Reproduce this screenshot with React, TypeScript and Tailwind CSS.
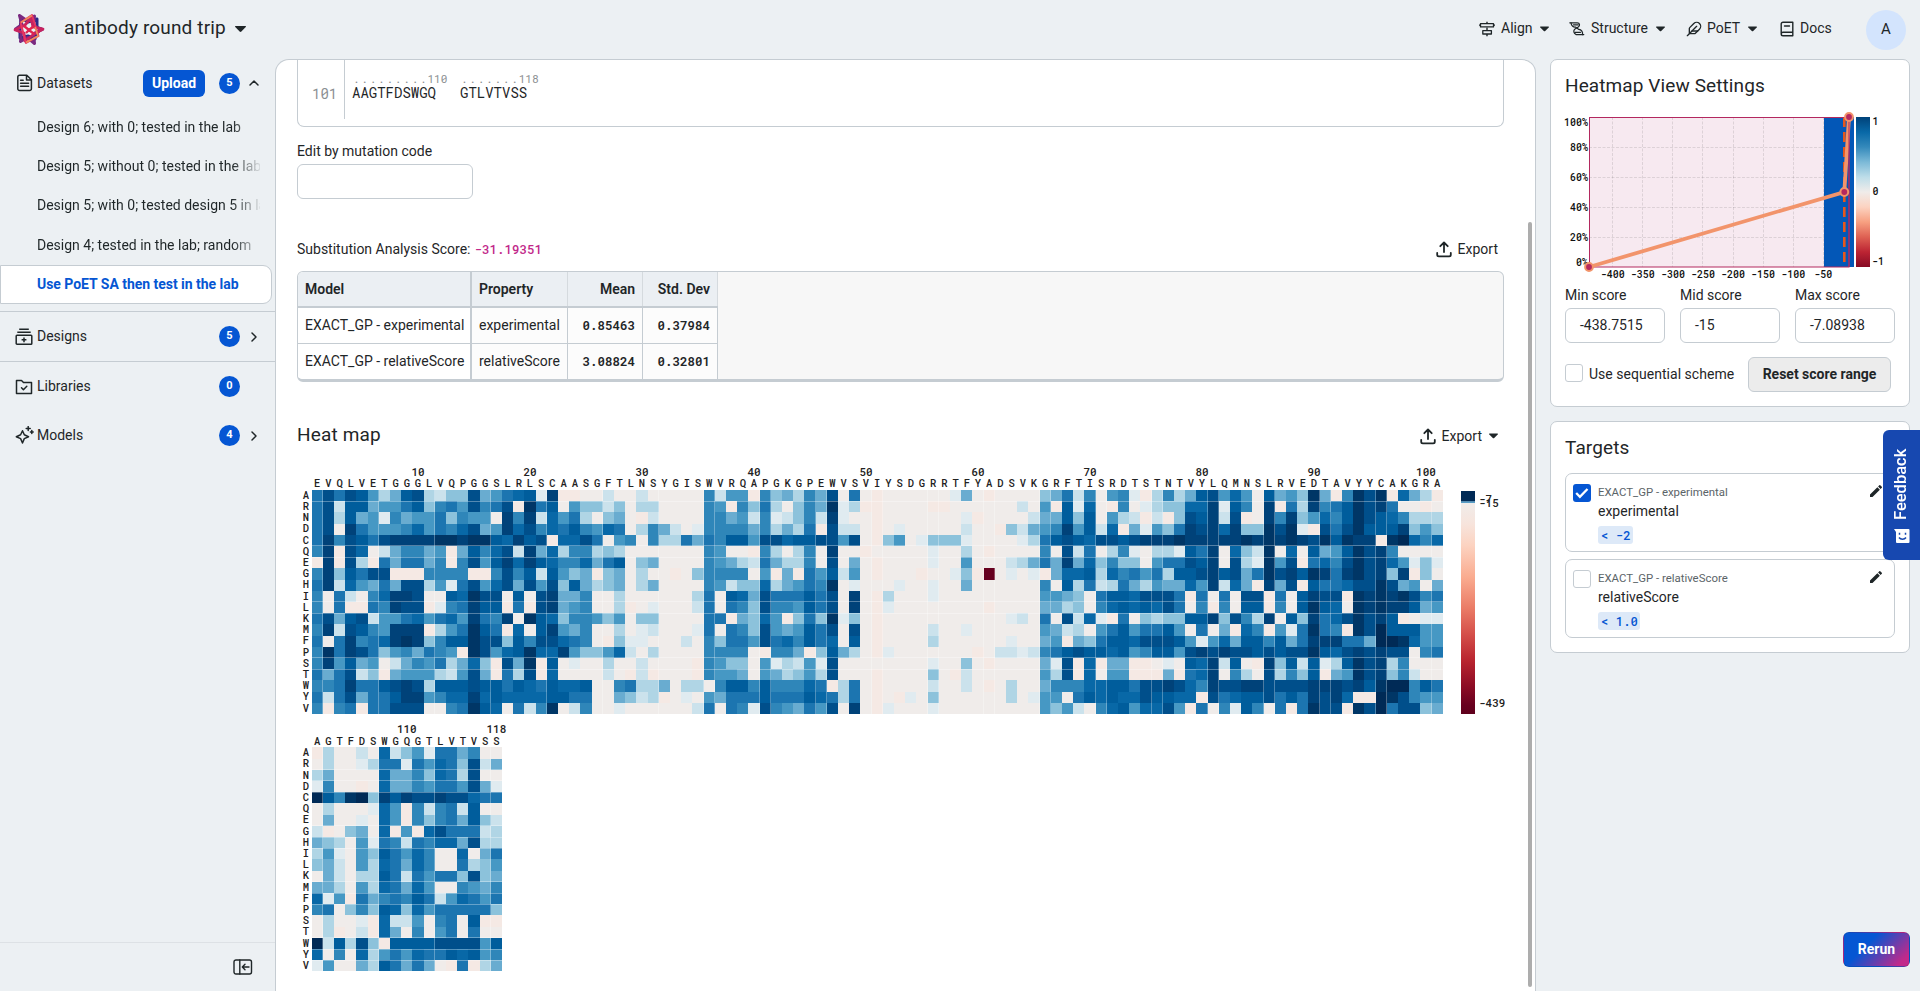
import React from "react";
import { LuFeather, LuChevronUp, LuChevronRight } from "react-icons/lu";
import { MdEdit } from "react-icons/md";

const AMINO = "ARNDCQEGHILKMFPSTWYV";

const SEQ_A =
  "EVQLVETGGGLVQPGGSLRLSCAASGFTLNSYGISWVRQAPGKGPEWVSVIYSDGRRTFYADSVKGRFTISRDTSTNTVYLQMNSLRVEDTAVYYCAKGRA";
const SEQ_B = "AGTFDSWGQGTLVTVSS";

const SHADES: Record<string, string> = {
  ".": "#f0ecea",
  p: "#f5e9e4",
  "1": "#e0ebf0",
  "2": "#cbe2ec",
  "3": "#b0d5e5",
  "4": "#8cc2db",
  "5": "#69acd0",
  "6": "#4698c4",
  "7": "#2f86b9",
  "8": "#1c75b0",
  "9": "#0868a7",
  a: "#005d9c",
  b: "#004f8b",
  c: "#004279",
  d: "#003666",
  e: "#002a56",
  X: "#67001f",
};

const ROWS_A = [
  "8b8ba 635ab 3244b 5689a 1cpp. .2..2 .... . 7266p 74537 5b.8. p.... ..15. p.... 4582 7 .671p 3735a b696. a564d 5p7db dp953 p",
  "8b2aa 5668a 4786b 78bpd 8a.64 424.3 3... . 76p74 83.47 5d13p p.... pp... ...2. 6pa1 9 .p7.1 34499 c1a7. cp83c 78adb c8..p .",
  "8b3a5 61756 68476 6.c7c 29683 .45.p 2... . 77562 71247 2c1.. p.... ...1p ....2 55a4 a .632p 2p4ba c2bp. c7c46 97adb a9733 3",
  "8b.c8 66679 6879b 56c9b 798a7 698.3 752. 1 77775 73538 pb22. p.1.. ...2. .p425 67c6 a 29p51 648cb c9c44 dbd1p b8bda aac46 4",
  "8c7ba 8bccc cddcd da9ca bp99b 8.67. 7338 5 87aa6 bb9aa bb6b. p46.1 4441. ...13 8aba 9 bbabc ccdcc cccdc dcdcb dadcc pde97 9",
  "7cpb9 .2577 56p5a 79b2c 59377 343.. .... . 76..p 73.37 .c..p ..... 1..3. p.... 7.b2 8 .371. 331a8 c.942 d.9.a 56adb c7... .",
  "pcpb3 p8588 57p7b 6ac9c a9779 58a.4 5... . 76532 85337 .b.5. p.... 1..6. ..235 85c5 9 4744. 688ba c.b31 d6bp8 97bdb c9614 1",
  "7c4a8 bbppp 7777p p7b7a 2a645 p45.3 ..p. 4 7777. 6p5p8 6a26. p...p ..14p X.1.1 p599 a 39786 83aab cab58 dbcad c8cdb c4cp4 .",
  "8c296 585bb 3618b 69b5b 6b4a5 345.3 5... . 76244 93568 7d.1. ..1.. 1..5. ..... 7.a3 8 23853 65596 c295p c5bpa 889bb db56. 5",
  "7.82. 79ccb ..a9d bb.a. bc557 ..3.. .... 3 8.a95 b888a 8b.c. p3... 1.... ..... 6654 . 8aa9b bb8p8 .8.bb p8.ac bbpdc dcdb7 8",
  "7.8pp 87cbb p178c aap8p bc567 ..3p. 1... 2 8.874 b776a 8b.c. p1... ..... p.... 5534 . 79a9a 9b8.7 p7.aa p7.ad a9.dc dcca5 6",
  "8b5ab 26689 6896c 87c.d a9477 646.4 4... . 88p54 96p48 4d14. p.... ..... ..12. 8.b2 9 1p8.4 344aa c4b73 c.a4c 89bdb cap.1 1",
  "7c2ba 76ccc p368d a8p9. ac657 ..3.1 2... 1 8.874 b656a 8b.b. p.... 2..1. ..... 6523 . 68a68 8a6.8 .5p97 p618d 87pdb eaaa6 6",
  "8.8c7 89cdc 47aad bb4a7 bb987 .p411 ...2 . 74886 b897a 89.a. p.... 3.... ..1.. 56p5 4 8aa9b bba61 695aa 7a58c cc885 eed96 6",
  "7d8cb 84675 876pd b69ad 99c64 4692. 3... . 7777. p775p 4a53. p1... ....p .2212 78ab a a9a67 aa6bc bcbba babbd a9bcb cbb.7 8",
  "7c6a5 6.257 68359 4pb5d pa.1. .3..2 .... p 7644. 61326 1b... ..... 1..4. p.... 51bp 9 p55pp .1.a9 c2a.p c4a2a 13adb c37.. .",
  "858b2 4p566 6326b 5p83b p9... .2.p2 p... p 7665. 65346 3b... p.... 4.p2. ..... 63bp 9 .66pp p5p89 c.73. b374a p56db c472. .",
  "778c8 8abcb 3aaab aa8a9 8a99a ..783 35.3 3 .7aa7 a7779 8p38. p.... 2..2. p.3.. 5777 9 9aa8b bcb97 cbbcc bbbbc ccbca dee7a 8",
  "828b5 88acc 6799c 9a999 9aa88 ..542 3p.1 . 65888 a888a 9838. p.p1. 4.... ..3.1 66.8 a 9a99b aa99p b89aa b8a8c bc9pp edb76 6",
  "7p78p 88bbb ..78d a9.82 7d.27 ..1.. .... 2 8.871 b7658 6b.c. p1... 1.... ..... 6462 . 79a69 9b6p8 .71a7 .8p8d bbpdb e8bb4 5",
].map((r) => r.replace(/ /g, ""));

const ROWS_B = [
  "p3..2 .9246 18857 ..",
  ".3..1 38818 6984b 25",
  "35... .9557 4983b ..",
  "17..p .9557 6886b 51",
  "ea7de 4cacb bcbb9 88",
  ".3... 196p7 2782a ..",
  ".5..1 .96p7 4785a 42",
  "2p.45 .9p6p 9b888 23",
  "543.6 18728 7995b 33",
  "361.6 4a869 7..9. 58",
  "452.6 39859 7..83 46",
  ".52.3 3a828 6884b 45",
  "553.6 39859 6..76 57",
  "916p8 5787a 82698 68",
  "78.47 4a949 68888 84",
  ".3..1 p9226 .78.a pp",
  ".3p.2 p95.7 .68.8 ..",
  "e2a3b 4paaa abbbb 6a",
  "9.7.9 36869 88a9a 67",
  "16..5 3a858 5.p8p 35",
].map((r) => r.replace(/ /g, ""));

const CELL = 11.2;

function Heatmap({
  seq,
  rows,
  start,
  ticks,
  width,
  height,
  top,
  seams,
  children,
}: {
  seq: string;
  rows: string[];
  start: number;
  ticks: number[];
  width: number;
  height: number;
  top: number;
  seams: number[];
  children?: React.ReactNode;
}) {
  const left = 14.6;
  const w = seq.length * CELL;
  const h = rows.length * CELL;
  return (
    <svg
      width={width}
      height={height}
      className="block font-['Roboto_Mono','DejaVu_Sans_Mono',monospace] text-[10.500px] font-medium"
      fill="#222"
    >
      {ticks.map((t) => (
        <text key={t} x={left + (t - start + 0.5) * CELL} y={top - 14} textAnchor="middle" fontSize="11">
          {t}
        </text>
      ))}
      {seq.split("").map((c, i) => (
        <text key={i} x={left + (i + 0.5) * CELL} y={top - 2.5} textAnchor="middle">
          {c}
        </text>
      ))}
      {AMINO.split("").map((c, i) => (
        <text key={c} x={9} y={top + (i + 0.5) * CELL + 3.2} textAnchor="middle">
          {c}
        </text>
      ))}
      <g shapeRendering="crispEdges">
        {rows.map((row, r) =>
          row.split("").map((v, c) => (
            <rect key={r + "-" + c} x={left + c * CELL} y={top + r * CELL} width={CELL} height={CELL} fill={SHADES[v]} />
          ))
        )}
        {rows.map((_, r) =>
          r > 0 && seams.includes(r % 5) ? (
            <rect key={r} x={left} y={Math.floor(top + r * CELL)} width={w} height="1" fill="#fff" fillOpacity=".33" />
          ) : null
        )}
        {seq.split("").map((_, c) =>
          c > 0 && (c % 5 === 1 || (c > 34 && c % 5 === 0)) ? (
            <rect key={c} x={Math.floor(left + c * CELL)} y={top} width="1" height={h} fill="#fff" fillOpacity=".3" />
          ) : null
        )}
      </g>
      {children}
    </svg>
  );
}

function ScaleStops() {
  return (
    <>
      <stop offset="0" stopColor="#f0ecea" />
      <stop offset="0.1" stopColor="#f7e4dc" />
      <stop offset="0.2" stopColor="#fcd3c1" />
      <stop offset="0.35" stopColor="#faac90" />
      <stop offset="0.5" stopColor="#ea7b66" />
      <stop offset="0.62" stopColor="#d5504a" />
      <stop offset="0.75" stopColor="#b8242f" />
      <stop offset="0.87" stopColor="#8c0c25" />
      <stop offset="0.96" stopColor="#67001f" />
      <stop offset="1" stopColor="#5f001c" />
    </>
  );
}

function Caret({ className = "" }: { className?: string }) {
  return (
    <svg width="9" height="6" viewBox="0 0 9 6" className={className}>
      <path d="M0.3 1.4C0 1 .2.6.7.6h7.6c.5 0 .7.4.4.8L5.2 5a1 1 0 0 1-1.4 0z" fill="#1f2628" />
    </svg>
  );
}

function Logo() {
  return (
    <svg width="32" height="32" viewBox="0 0 32 32" fill="none" strokeLinejoin="round">
      <path d="M8 5l7 4 9-3v8l4 2-5 5-1 5-7-3-8 2v-8z" stroke="#2b2a86" strokeWidth="3" />
      <path d="M6.500 2.500l8 5.500 7-5-1 10 9 3.500-9 4 1 10-7-6-7 4 1-9-6-3.500 6.500-4.500z" stroke="#7a2a80" strokeWidth="3" />
      <path d="M2 17l10-5 6-7 2 9 10 2-9 5-9 7-1-8z" stroke="#c8235f" strokeWidth="2.800" />
      <path d="M19 2L7.500 9.500 13 30l12.500-7z" stroke="#e63560" strokeWidth="2" />
      <path d="M8 9.500l11-7M13 29.500l12-6.500-3-9" stroke="#ee8c5a" strokeWidth="1.700" />
      <path d="M11 13l5 4 5-4M13 20l3-3 5 4" stroke="#e0244f" strokeWidth="2.400" />
    </svg>
  );
}

const line = { fill: "none", stroke: "#1f2628", strokeWidth: 1.5, strokeLinecap: "round" as const, strokeLinejoin: "round" as const };

const AlignIcon = () => (
  <svg width="16" height="16" viewBox="0 0 16 16" {...line} strokeWidth={1.4} strokeLinecap="butt">
    <path d="M8 .8v2M8 6.500v3.200M8 13v2.300" />
    <path d="M0 4.200h1.500M14.500 4.200H16M1.500 2.700h13v3.200h-13z" strokeWidth="1.300" />
    <path d="M3.800 9.700h8.600v3.300H3.800z" strokeWidth="1.300" />
  </svg>
);
const StructureIcon = () => (
  <svg width="16" height="16" viewBox="0 0 16 16" {...line} strokeWidth={1.2}>
    <path d="M.8 1.800h7.500c2.500 0 3 3 1 4.200L6 8c-2 1.500-1.400 4 1 5.600h7.800" />
    <path d="M2 1.800c.3 3.500 2.500 4.500 4.500 4.300l3.300 2.300c2.700.3 4.200 2.500 3.700 5.200M4.500 3.800h4.800M6 11.300h5.500" />
  </svg>
);
const DocsIcon = () => (
  <svg width="14" height="16" viewBox="0 0 14 16" {...line} strokeWidth={1.4}>
    <path d="M12.800 1.200H3A1.800 1.800 0 0 0 1.200 3v10c0 1 .8 1.800 1.800 1.800h9.800zM12.800 11.200H3A1.800 1.800 0 0 0 1.200 13M4.500 5h5" />
  </svg>
);
const DatasetIcon = () => (
  <svg width="18" height="18" viewBox="0 0 18 18" {...line}>
    <path d="M3.600 1.200h7.200l4.600 4.600v9a1.800 1.800 0 0 1-1.800 1.800H3.600a1.800 1.800 0 0 1-1.800-1.800V3a1.800 1.800 0 0 1 1.800-1.800zM10.500 1.500v4.600h4.600M4.600 6.200h2.600M4.600 9.200h8M4.600 12.200h8" />
  </svg>
);
const DesignsIcon = () => (
  <svg width="18" height="18" viewBox="0 0 18 18" {...line} strokeLinecap="butt">
    <path d="M4.200 1.200h9.600M2.300 4.200h13.400M2 7.200h14c.5 0 .8.300.8.800v7.500c0 .5-.3.800-.8.800H2a.8.800 0 0 1-.8-.8V8c0-.5.3-.8.8-.8zM9 9.400v4.800M6.600 11.800h4.800" />
  </svg>
);
const LibrariesIcon = () => (
  <svg width="18" height="18" viewBox="0 0 18 18" {...line}>
    <path d="M1.500 2.500h5l2 2h8v11h-15zM6.500 9.800l1.900 1.900 3.400-3.400" />
  </svg>
);
const ModelsIcon = () => (
  <svg width="19" height="19" viewBox="0 0 19 19" {...line}>
    <path d="M7.500 4.800l1.800 4 4.200 1.900-4.200 1.900-1.800 4.400-1.900-4.400-4.300-1.900 4.300-1.900zM13.200.6v4M11.200 2.600h4M16.800 4.600v2.800M15.400 6h2.800" />
  </svg>
);
const ExportIcon = () => (
  <svg width="16" height="17" viewBox="0 0 16 17" {...line} strokeWidth={1.8}>
    <path d="M8 11V1.800M4.300 5.200L8 1.500l3.700 3.700M1.200 11.800v2c0 1 .6 1.600 1.600 1.600h10.400c1 0 1.600-.6 1.600-1.600v-2" />
  </svg>
);

function Badge({ n }: { n: string }) {
  return (
    <span className="absolute left-[219px] flex h-[21px] w-[21px] items-center justify-center rounded-full bg-[#0556d3] text-[11px] font-bold text-white">
      {n}
    </span>
  );
}

function SideRow({ icon, label, n, chevron, h }: { icon: React.ReactNode; label: string; n: string; chevron?: boolean; h: string }) {
  return (
    <div className={"relative flex items-center pl-[15px] " + h}>
      <span className="flex w-[22px]">{icon}</span>
      {label}
      <Badge n={n} />
      {chevron && <LuChevronRight className="absolute left-[246px] h-4 w-4" strokeWidth={2.2} />}
    </div>
  );
}

function Sidebar() {
  const items = [
    ["Design 6; with 0; tested in the lab", "h-[39px]"],
    ["Design 5; without 0; tested in the lab", "h-[39px]"],
    ["Design 5; with 0; tested design 5 in lab", "h-[39px]"],
    ["Design 4; tested in the lab; random", "h-[40px]"],
  ];
  return (
    <aside className="flex w-[275px] shrink-0 flex-col">
      <div className="relative flex h-[49px] items-center pb-[1px] pl-[16px]">
        <span className="flex w-[21px]">
          <DatasetIcon />
        </span>
        Datasets
        <button className="absolute left-[143px] h-[27px] w-[62px] rounded-[6px] bg-[#0556d3] text-[14px] font-bold text-white">Upload</button>
        <Badge n="5" />
        <LuChevronUp className="absolute left-[246px] h-4 w-4" strokeWidth={2.2} />
      </div>
      {items.map(([t, h]) => (
        <div key={t} className={"flex items-center pl-[37px] " + h}>
          <span className="block w-[223px] overflow-hidden whitespace-nowrap [mask-image:linear-gradient(to_right,#000_195px,transparent_226px)]">{t}</span>
        </div>
      ))}
      <div className="flex h-[39px] w-[272px] items-center rounded-r-[9px] border border-[#c5ccd2] bg-white pl-[36px] font-bold tracking-[-0.03px] text-[#0556d3]">
        Use PoET SA then test in the lab
      </div>
      <div className="mt-[7px] border-t border-[#c5ccd2]" />
      <SideRow icon={<DesignsIcon />} label="Designs" n="5" chevron h="h-[49px]" />
      <div className="border-t border-[#c5ccd2]" />
      <SideRow icon={<LibrariesIcon />} label="Libraries" n="0" h="h-[49px]" />
      <SideRow icon={<ModelsIcon />} label="Models" n="4" chevron h="h-[49px]" />
      <div className="mt-auto flex h-[49px] items-center border-t border-[#dde1e5] pl-[233px]">
        <svg width="20" height="16" viewBox="0 0 20 16" {...line} strokeWidth={1.4} className="mt-[-1px]">
          <rect x="1" y="1" width="17.500" height="14" rx="2" />
          <path d="M6.800 1v14M16 8H9.500M12 5.300L9.300 8l2.700 2.700" />
        </svg>
      </div>
    </aside>
  );
}

function Header() {
  return (
    <header className="flex h-[59px] shrink-0 items-center">
      <div className="ml-[13px] mt-[-1px]">
        <Logo />
      </div>
      <h1 className="ml-[19px] mt-[-4px] text-[19px] leading-6 tracking-[0.15px]">antibody round trip</h1>
      <Caret className="ml-[10px] mt-[-2px] scale-125" />
      <nav className="ml-auto flex items-center pr-[14px] text-[14px]">
        <div className="mt-[-2px] flex items-center">
          <AlignIcon />
          <span className="ml-[6px] w-[39px]">Align</span>
          <Caret />
          <span className="ml-[20px]">
            <StructureIcon />
          </span>
          <span className="ml-[6px] w-[65px]">Structure</span>
          <Caret />
          <LuFeather className="ml-[21px] h-4 w-4" strokeWidth={2} />
          <span className="ml-[5px] w-[41px]">PoET</span>
          <Caret />
          <span className="ml-[23px]">
            <DocsIcon />
          </span>
          <span className="ml-[6px] w-[66px]">Docs</span>
        </div>
        <span className="flex h-10 w-10 items-center justify-center rounded-full bg-[#d3e4fd] text-[15px]">A</span>
      </nav>
    </header>
  );
}

function SeqBlock({ seq, n }: { seq: string; n: string }) {
  return (
    <div className="mr-[24px]">
      <div className="flex h-3 items-end text-[11px] leading-3 text-[#8b8f92]">
        {seq
          .slice(0, -1)
          .split("")
          .map((_, i) => (
            <span key={i} className="w-[8.400px] text-center">
              .
            </span>
          ))}
        <span className="w-[8.400px]">{n}</span>
      </div>
      <div className="text-[14px] leading-[15px]">{seq}</div>
    </div>
  );
}

const MODELS = [
  ["EXACT_GP - experimental", "experimental", "0.85463", "0.37984"],
  ["EXACT_GP - relativeScore", "relativeScore", "3.08824", "0.32801"],
];

function ModelTable() {
  const grid = "grid w-[420px] grid-cols-[174px_96px_75px_75px]";
  return (
    <div className="h-[111px] overflow-hidden rounded-[6px] border border-b-[3px] border-[#c5ccd2] bg-[#f7f7f7]">
      <div className={grid + " h-[36px] border-b-2 border-[#c5ccd2] bg-[#ebeff3] font-semibold"}>
        <div className="flex items-center border-r-2 border-[#c5ccd2] pl-[7px]">Model</div>
        <div className="flex items-center border-r border-[#d5dade] pl-[7px]">Property</div>
        <div className="flex items-center justify-end border-r border-[#d5dade] pr-[7px]">Mean</div>
        <div className="flex items-center justify-end border-r border-[#d5dade] pr-[7px]">Std. Dev</div>
      </div>
      {MODELS.map((m, i) => (
        <div key={m[0]} className={grid + (i === 0 ? " h-[36px] border-b border-[#c5ccd2]" : " h-[35px]")}>
          <div className="flex items-center border-r-2 border-[#c5ccd2] bg-white pl-[7px]">{m[0]}</div>
          <div className="flex items-center border-r border-[#c5ccd2] bg-[#fcfcfc] pl-[7px]">{m[1]}</div>
          <div className="flex items-center justify-end border-r border-[#c5ccd2] bg-[#fcfcfc] pr-[7px] font-['Roboto_Mono','DejaVu_Sans_Mono',monospace] text-[12.500px] font-semibold">{m[2]}</div>
          <div className="flex items-center justify-end border-r border-[#c5ccd2] bg-[#fcfcfc] pr-[7px] font-['Roboto_Mono','DejaVu_Sans_Mono',monospace] text-[12.500px] font-semibold">{m[3]}</div>
        </div>
      ))}
    </div>
  );
}

function MainPanel() {
  return (
    <main className="relative w-[1261px] shrink-0 overflow-hidden rounded-t-[14px] border border-b-0 border-[#c5ccd2] bg-white pl-[21px] pr-[31px]">
      <div className="flex h-[67px] rounded-b-[7px] border border-t-0 border-[#c5ccd2] font-['Roboto_Mono','DejaVu_Sans_Mono',monospace]">
        <div className="h-[59px] w-[47px] border-r border-[#c5ccd2] pl-[14px] pt-[26px] text-[14px] leading-[15px] text-[#8b8f92]">101</div>
        <div className="flex pl-[7px] pt-[13px]">
          <SeqBlock seq="AAGTFDSWGQ" n="110" />
          <SeqBlock seq="GTLVTVSS" n="118" />
        </div>
      </div>
      <div className="mt-[14px] leading-5">Edit by mutation code</div>
      <div className="mt-[3px] h-[35px] w-[176px] rounded-[6px] border border-[#c5ccd2]" />
      <div className="mt-[40px] flex h-5 items-center">
        <span>Substitution Analysis Score:</span>
        <span className="ml-[4px] font-['Roboto_Mono','DejaVu_Sans_Mono',monospace] text-[12.500px] font-medium text-[#c2298a]">-31.19351</span>
        <span className="ml-auto flex items-center pr-[6px]">
          <ExportIcon />
          <span className="ml-[6px]">Export</span>
        </span>
      </div>
      <div className="mt-[12px]">
        <ModelTable />
      </div>
      <div className="mt-[42px] flex h-6 items-center">
        <h2 className="mt-[-1px] text-[19px] tracking-[0.15px]">Heat map</h2>
        <span className="ml-auto flex items-center pr-[6px]">
          <ExportIcon />
          <span className="ml-[6px] mr-[7px]">Export</span>
          <Caret />
        </span>
      </div>
      <div className="mt-[13px]">
        <Heatmap
          seq={SEQ_A}
          rows={ROWS_A}
          start={1}
          ticks={[10, 20, 30, 40, 50, 60, 70, 80, 90, 100]}
          width={1208}
          height={260}
          top={28.9}
          seams={[0, 1]}
        >
          <defs>
            <linearGradient id="scoreScale" x1="0" y1="0" x2="0" y2="1">
              <ScaleStops />
            </linearGradient>
          </defs>
          <rect x="1164" y="42" width="14" height="211" fill="url(#scoreScale)" />
          <rect x="1164" y="30" width="14" height="10.500" fill="#002a56" />
          <rect x="1164" y="40.500" width="14" height="1.300" fill="#2f86b9" />
          <text x="1182" y="42" fontSize="11">-7</text>
          <text x="1182" y="46" fontSize="11">-15</text>
          <text x="1182" y="246" fontSize="11">-439</text>
        </Heatmap>
        <Heatmap seq={SEQ_B} rows={ROWS_B} start={102} ticks={[110, 118]} width={240} height={256} top={26.4} seams={[2, 3, 4]} />
      </div>
      <div className="absolute left-[1252px] top-[162px] h-[765px] w-[4px] rounded-full bg-[#adadad]" />
    </main>
  );
}

function RangeChart() {
  const xs = [-400, -350, -300, -250, -200, -150, -100, -50];
  const px = (v: number) => 24.5 + ((v + 438.75) / 431.66) * 259.5;
  const py = (v: number) => 155 - v * 1.5;
  return (
    <svg
      width="330"
      height="167"
      className="block overflow-visible font-['Roboto_Mono','DejaVu_Sans_Mono',monospace] text-[10px] font-medium"
      fill="#111"
    >
      <defs>
        <linearGradient id="divergingScale" x1="0" y1="0" x2="0" y2="1">
          <stop offset="0" stopColor="#004279" />
          <stop offset="0.1" stopColor="#0868a7" />
          <stop offset="0.2" stopColor="#3489bb" />
          <stop offset="0.3" stopColor="#7bb9d7" />
          <stop offset="0.4" stopColor="#bddde9" />
          <stop offset="0.5" stopColor="#f0ecea" />
          <stop offset="0.6" stopColor="#fcd3c1" />
          <stop offset="0.7" stopColor="#f7a081" />
          <stop offset="0.8" stopColor="#de6153" />
          <stop offset="0.9" stopColor="#bc2433" />
          <stop offset="1" stopColor="#870b24" />
        </linearGradient>
      </defs>
      <rect x="24.500" y="5" width="259.500" height="150" fill="#f7e9f0" />
      {xs.map((v) => (
        <g key={v}>
          <path d={`M${Math.floor(px(v)) + 0.5} 5V155`} stroke="#000" strokeOpacity=".1" strokeDasharray="3 1.500" />
          <text x={px(v)} y="166" textAnchor="middle">
            {v}
          </text>
        </g>
      ))}
      {[20, 40, 60, 80].map((v) => (
        <path key={v} d={`M24 ${py(v) + 0.5}H284`} stroke="#000" strokeOpacity=".1" strokeDasharray="3 1.500" />
      ))}
      {[
        [100, 13.5],
        [80, 38.5],
        [60, 68.5],
        [40, 98.5],
        [20, 128.5],
        [0, 153.5],
      ].map(([v, y]) => (
        <text key={v} x="23" y={y} textAnchor="end">
          {v}%
        </text>
      ))}
      <rect x="259" y="5" width="30" height="150" fill="#0357b7" />
      <path d="M279.300 5V155" stroke="#e5571d" strokeWidth="2.600" strokeDasharray="10 5" />
      <rect x="24.500" y="5.500" width="259.500" height="149.500" fill="none" stroke="#b3285f" />
      <path d="M24 155L279.300 80L284 5" fill="none" stroke="#f2946b" strokeWidth="3.800" />
      <path d="M284 5V155" stroke="#b3285f" />
      {[
        [24, 155],
        [279.3, 80],
        [284, 5],
      ].map(([x, y]) => (
        <circle key={x} cx={x} cy={y} r="3.900" fill="#b5285f" stroke="#f2946b" strokeWidth="2" />
      ))}
      <rect x="291" y="5" width="14" height="150" fill="url(#divergingScale)" />
      <text x="307.500" y="13">1</text>
      <text x="307.500" y="83">0</text>
      <text x="307" y="153">-1</text>
    </svg>
  );
}

function Check({ on }: { on?: boolean }) {
  return on ? (
    <span className="flex h-[18px] w-[18px] items-center justify-center rounded-[3px] bg-[#0556d3]">
      <svg width="14" height="12" viewBox="0 0 14 12" fill="none" stroke="#fff" strokeWidth="2.300">
        <path d="M1.200 6l3.700 3.800L12.500 2" />
      </svg>
    </span>
  ) : (
    <span className="block h-[18px] w-[18px] rounded-[3px] border border-[#c5ccd2] bg-white" />
  );
}

function Target({ name, on, rule, w }: { name: string; on?: boolean; rule: string; w: string }) {
  return (
    <div className="flex h-[79px] rounded-[7px] border border-[#c5ccd2] pl-[7px] pt-[10px]">
      <Check on={on} />
      <div className="ml-[7px] flex-1">
        <div className="text-[11.400px] leading-[17px] text-[#5b6468]">EXACT_GP - {name}</div>
        <div className="leading-5">{name}</div>
        <div className={"mt-[5px] flex h-[18px] items-center whitespace-pre rounded-[3px] bg-[#dde9f8] pl-[3px] font-['Roboto_Mono','DejaVu_Sans_Mono',monospace] text-[12.300px] font-medium text-[#0556d3] " + w}>
          {rule}
        </div>
      </div>
      <MdEdit className="mr-[10px] mt-[-1px] h-4 w-4 text-[#1f2628]" />
    </div>
  );
}

function RightPanel() {
  return (
    <section className="ml-[14px] flex w-[360px] flex-col gap-[14px]">
      <div className="h-[348px] rounded-[7px] border border-[#c5ccd2] bg-white pl-[14px] pt-[14px]">
        <h2 className="h-6 text-[19px] leading-[23px] tracking-[0.1px]">Heatmap View Settings</h2>
        <div className="mt-[14px]">
          <RangeChart />
        </div>
        <div className="mt-[6px] grid grid-cols-[100px_100px_100px] gap-x-[15px]">
          {[
            ["Min score", "-438.7515"],
            ["Mid score", "-15"],
            ["Max score", "-7.08938"],
          ].map(([l, v]) => (
            <label key={l} className="block">
              <span className="block leading-5">{l}</span>
              <span className="mt-[3px] flex h-[35px] items-center rounded-[6px] border border-[#c5ccd2] pb-[1px] pl-[14px]">{v}</span>
            </label>
          ))}
        </div>
        <div className="mt-[14px] flex h-[35px] items-center">
          <span className="mb-[4px]">
            <Check />
          </span>
          <span className="ml-[6px] w-[159px] whitespace-nowrap tracking-[0.03px]">Use sequential scheme</span>
          <button className="h-[35px] w-[143px] rounded-[6px] border border-[#c5ccd2] bg-[#ececec] font-bold">Reset score range</button>
        </div>
      </div>
      <div className="h-[232px] rounded-[7px] border border-[#c5ccd2] bg-white px-[14px] pt-[14px]">
        <h2 className="h-6 text-[19px] leading-[23px] tracking-[0.1px]">Targets</h2>
        <div className="mt-[13px] flex flex-col gap-[7px]">
          <Target name="experimental" on rule="< -2" w="w-[35px]" />
          <Target name="relativeScore" rule="< 1.0" w="w-[42px]" />
        </div>
      </div>
    </section>
  );
}

export default function App() {
  return (
    <div className="relative flex h-[991px] w-[1920px] flex-col overflow-hidden bg-[#ecf0f3] font-['Roboto',sans-serif] text-[14px] text-[#1f2628]">
      <Header />
      <div className="flex min-h-0 flex-1">
        <Sidebar />
        <MainPanel />
        <RightPanel />
      </div>
      <div className="absolute right-0 top-[430px] flex h-[130px] w-[37px] rounded-l-[6px] bg-[#1748b0] text-white">
        <span className="absolute left-[7px] top-[14px] h-[76px] rotate-180 text-[16.500px] font-medium leading-[22px] [writing-mode:vertical-rl]">Feedback</span>
        <svg width="16" height="16" viewBox="0 0 16 16" className="absolute left-[11px] top-[98px]">
          <path d="M0 1h14.500a1 1 0 0 1 1 1v12a1 1 0 0 1-1 1H3a1 1 0 0 1-1-1V4z" fill="#fff" />
          <path d="M5.500 4.700v2M11.500 4.700v2M5 9.500c1.500 2.300 5.500 2.300 7 0" fill="none" stroke="#1748b0" strokeWidth="1.500" />
        </svg>
      </div>
      <button className="absolute left-[1843px] top-[932px] h-[35px] w-[67px] rounded-[6px] border border-black/10 bg-[linear-gradient(135deg,#0556d3_35%,#c2298a_88%)] text-[14px] font-bold text-white">
        Rerun
      </button>
    </div>
  );
}
